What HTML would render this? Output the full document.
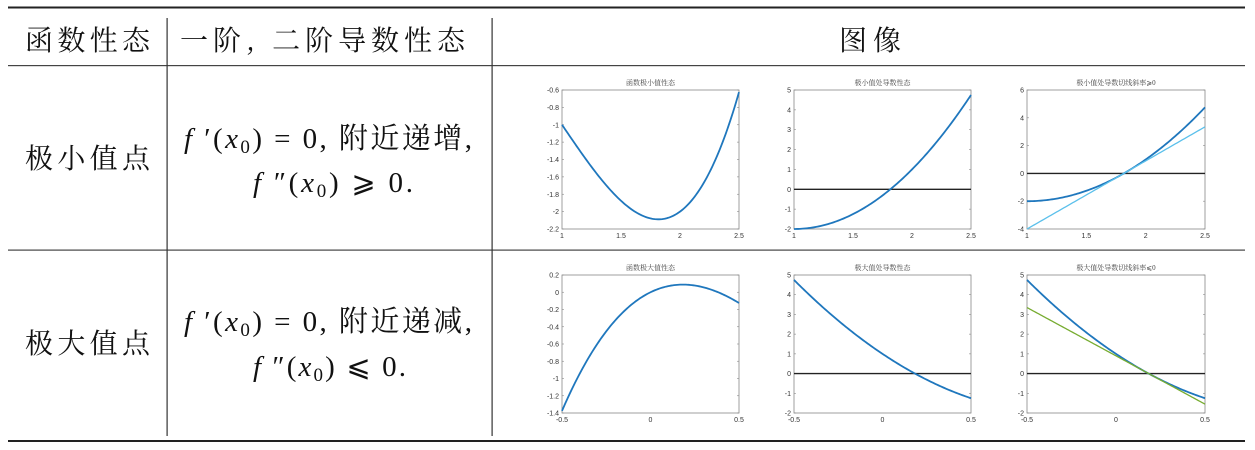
<!DOCTYPE html>
<html><head><meta charset="utf-8"><style>
html,body{margin:0;padding:0;background:#fff;width:1255px;height:450px;overflow:hidden}
svg{display:block}
.cj{font-family:"Noto Serif CJK SC","Liberation Serif",serif;font-size:28px;fill:#111}
.m{font-family:"Liberation Serif","Noto Serif CJK SC",serif;font-size:29px;fill:#111}
.t{font-family:"Liberation Sans",sans-serif;font-size:7px;fill:#333}
.tt{font-family:"Liberation Serif","Noto Serif CJK SC",serif;font-size:7px;fill:#444}
</style></head><body>
<svg id="s" width="1255" height="450" xmlns="http://www.w3.org/2000/svg">
<rect x="0" y="0" width="1255" height="450" fill="#fff"/>
<rect x="8" y="6.5" width="1237" height="2" fill="#222"/>
<rect x="8" y="65" width="1237" height="1.2" fill="#444"/>
<rect x="8" y="249.5" width="1237" height="1.2" fill="#444"/>
<rect x="8" y="440" width="1237" height="2" fill="#222"/>
<rect x="166.5" y="18" width="1.2" height="418" fill="#333"/>
<rect x="491.5" y="18" width="1.2" height="418" fill="#333"/>
<text class="cj" x="25" y="50" textLength="125" lengthAdjust="spacing">函数性态</text>
<text class="cj" x="180" y="50" textLength="285" lengthAdjust="spacing">一阶, 二阶导数性态</text>
<text class="cj" x="839" y="50" textLength="62" lengthAdjust="spacing">图像</text>
<text class="cj" x="25" y="168" textLength="125" lengthAdjust="spacing">极小值点</text>
<text class="cj" x="25" y="353" textLength="125" lengthAdjust="spacing">极大值点</text>
<text class="m" x="184" y="148" textLength="288" lengthAdjust="spacing"><tspan font-style="italic">f</tspan> ′(<tspan font-style="italic">x</tspan><tspan font-size="19" dy="5">0</tspan><tspan dy="-5">) = 0, 附近递增,</tspan></text>
<text class="m" x="253" y="192" textLength="160" lengthAdjust="spacing"><tspan font-style="italic">f</tspan> ″(<tspan font-style="italic">x</tspan><tspan font-size="19" dy="5">0</tspan><tspan dy="-5">) ⩾ 0.</tspan></text>
<text class="m" x="184" y="331" textLength="288" lengthAdjust="spacing"><tspan font-style="italic">f</tspan> ′(<tspan font-style="italic">x</tspan><tspan font-size="19" dy="5">0</tspan><tspan dy="-5">) = 0, 附近递减,</tspan></text>
<text class="m" x="253" y="376" textLength="153" lengthAdjust="spacing"><tspan font-style="italic">f</tspan> ″(<tspan font-style="italic">x</tspan><tspan font-size="19" dy="5">0</tspan><tspan dy="-5">) ⩽ 0.</tspan></text>
<g id="plots"></g>
</svg>
<script>
var g=document.getElementById('plots'),NS='http://www.w3.org/2000/svg';
function el(n,a,t){var e=document.createElementNS(NS,n);for(var k in a)e.setAttribute(k,a[k]);if(t!==undefined)e.textContent=t;g.appendChild(e);return e;}
function plot(o){
 var X0=o.x,Y0=o.y,W=o.w,H=o.h;
 function px(x){return X0+(x-o.xr[0])/(o.xr[1]-o.xr[0])*W}
 function py(y){return Y0+H-(y-o.yr[0])/(o.yr[1]-o.yr[0])*H}
 el('rect',{x:X0,y:Y0,width:W,height:H,fill:'#fff',stroke:'#888','stroke-width':0.8});
 el('text',{x:X0+W/2,y:Y0-5,'text-anchor':'middle','class':'tt'},o.title);
 o.yt.forEach(function(v){var yy=py(v);el('text',{x:X0-3,y:yy+2.5,'text-anchor':'end','class':'t'},String(v));
  el('line',{x1:X0,x2:X0+2,y1:yy,y2:yy,stroke:'#888','stroke-width':0.6});el('line',{x1:X0+W-2,x2:X0+W,y1:yy,y2:yy,stroke:'#888','stroke-width':0.6});});
 o.xt.forEach(function(v){var xx=px(v);el('text',{x:xx,y:Y0+H+9,'text-anchor':'middle','class':'t'},String(v));});
 if(o.zero)el('line',{x1:X0,x2:X0+W,y1:py(0),y2:py(0),stroke:'#222','stroke-width':1.4});
 o.curves.forEach(function(c){var d='';for(var i=0;i<=120;i++){var x=o.xr[0]+(o.xr[1]-o.xr[0])*i/120;d+=(i?'L':'M')+px(x).toFixed(2)+' '+py(c.f(x)).toFixed(2);}
  el('path',{d:d,fill:'none',stroke:c.c,'stroke-width':c.w||1.8});});
}
var B='#1f77bd';
var f1=function(x){var u=x-1;return u*u*u-2*u-1},d1=function(x){var u=x-1;return 3*u*u-2};
var f2=function(x){return x*x*x-3*x*x+x},d2=function(x){return 3*x*x-6*x+1};
var r1={y:90,h:139},r2={y:275,h:138};
plot({x:562,y:r1.y,w:177,h:r1.h,xr:[1,2.5],yr:[-2.2,-0.6],title:'函数极小值性态',yt:[-0.6,-0.8,-1,-1.2,-1.4,-1.6,-1.8,-2,-2.2],xt:[1,1.5,2,2.5],curves:[{f:f1,c:B}]});
plot({x:794,y:r1.y,w:177,h:r1.h,xr:[1,2.5],yr:[-2,5],title:'极小值处导数性态',yt:[5,4,3,2,1,0,-1,-2],xt:[1,1.5,2,2.5],zero:1,curves:[{f:d1,c:B}]});
plot({x:1027,y:r1.y,w:178,h:r1.h,xr:[1,2.5],yr:[-4,6],title:'极小值处导数切线斜率⩾0',yt:[6,4,2,0,-2,-4],xt:[1,1.5,2,2.5],zero:1,curves:[{f:d1,c:B},{f:function(x){return 4.9*(x-1.8165)},c:'#5bc0eb',w:1.3}]});
plot({x:562,y:r2.y,w:177,h:r2.h,xr:[-0.5,0.5],yr:[-1.4,0.2],title:'函数极大值性态',yt:[0.2,0,-0.2,-0.4,-0.6,-0.8,-1,-1.2,-1.4],xt:[-0.5,0,0.5],curves:[{f:f2,c:B}]});
plot({x:794,y:r2.y,w:177,h:r2.h,xr:[-0.5,0.5],yr:[-2,5],title:'极大值处导数性态',yt:[5,4,3,2,1,0,-1,-2],xt:[-0.5,0,0.5],zero:1,curves:[{f:d2,c:B}]});
plot({x:1027,y:r2.y,w:178,h:r2.h,xr:[-0.5,0.5],yr:[-2,5],title:'极大值处导数切线斜率⩽0',yt:[5,4,3,2,1,0,-1,-2],xt:[-0.5,0,0.5],zero:1,curves:[{f:d2,c:B},{f:function(x){return -4.9*(x-0.1835)},c:'#77ac30',w:1.3}]});
</script>
</body></html>
